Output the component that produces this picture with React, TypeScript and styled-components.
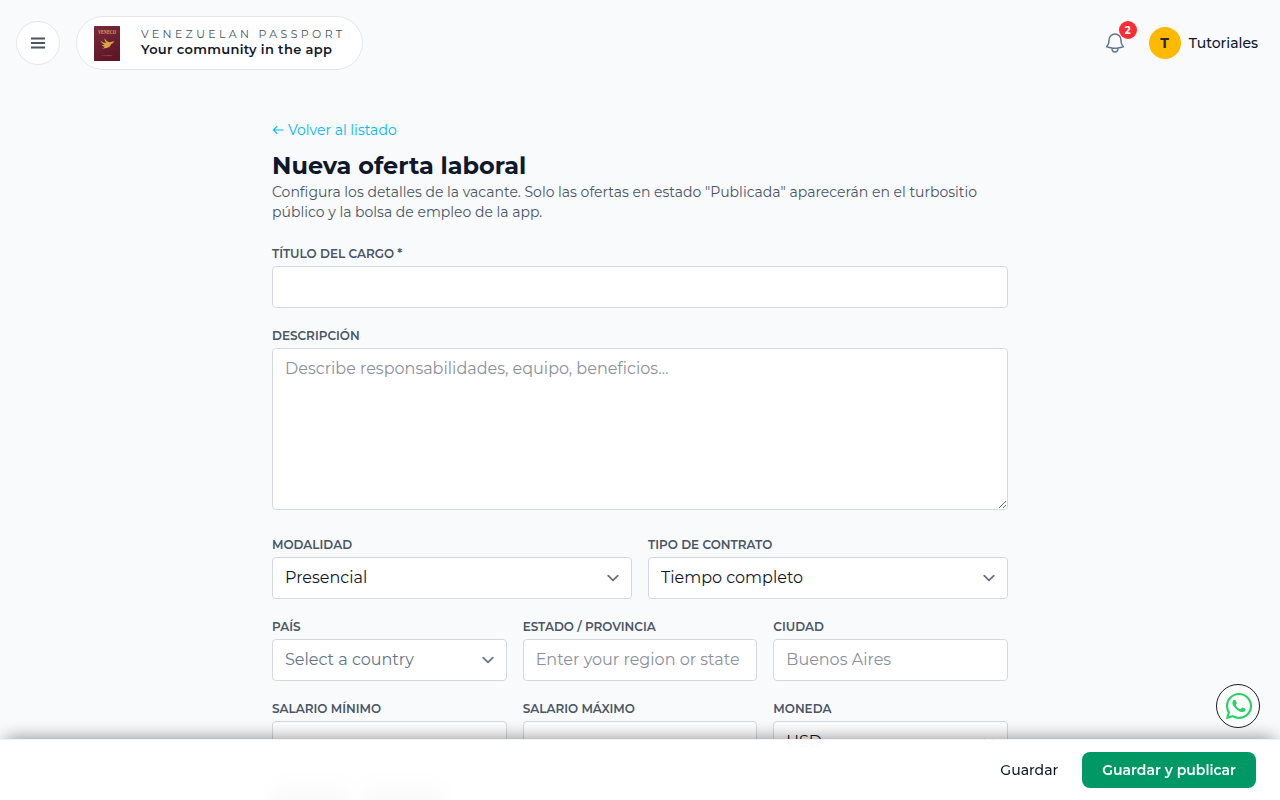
import React from "react";
import styled, { createGlobalStyle } from "styled-components";
import { FaWhatsapp } from "react-icons/fa";

const GlobalStyle = createGlobalStyle`
  *, *::before, *::after { box-sizing: border-box; }
  body {
    margin: 0;
    background: #f8fafc;
    color: #0f172a;
    font-family: Montserrat, Inter, sans-serif;
    font-size: 16px;
    line-height: 24px;
  }
  button, input, textarea, select { font: inherit; color: inherit; margin: 0; }
  h1, h2, p { margin: 0; }
`;

const Page = styled.div`
  height: 100vh;
  overflow: hidden;
`;

const Header = styled.header`
  display: flex;
  align-items: center;
  gap: 16px;
  padding: 16px 22px 16px 16px;
`;

const MenuButton = styled.button`
  display: grid;
  place-items: center;
  width: 44px;
  height: 44px;
  padding: 0;
  border: 1px solid #e5e7eb;
  border-radius: 50%;
  background: #fff;
`;

const BrandPill = styled.div`
  display: flex;
  align-items: center;
  gap: 21px;
  width: 287px;
  height: 54px;
  padding: 0 17px;
  border: 1px solid #e5e7eb;
  border-radius: 27px;
  background: #fff;
`;

const PassportArt = styled.svg`
  flex: none;
  width: 26px;
  height: 35px;
  margin-top: 1px;
`;

const BrandText = styled.div`
  display: flex;
  flex-direction: column;
  padding-bottom: 2px;
  white-space: nowrap;
`;

const Overline = styled.span`
  font-size: 11px;
  line-height: 15px;
  letter-spacing: 3.36px;
  color: #4a5565;
`;

const Tagline = styled.span`
  font-size: 13px;
  line-height: 15px;
  font-weight: 600;
  letter-spacing: 0.025em;
`;

const Account = styled.div`
  display: flex;
  align-items: center;
  margin-left: auto;
`;

const BellButton = styled.button`
  position: relative;
  display: grid;
  width: 24px;
  height: 24px;
  margin-right: 22px;
  padding: 0;
  border: 0;
  background: none;
  color: #64748b;
`;

const Badge = styled.span`
  position: absolute;
  top: -10px;
  right: -10px;
  width: 18px;
  height: 18px;
  border-radius: 50%;
  background: #fb2c36;
  color: #fff;
  font-size: 10px;
  line-height: 19px;
  font-weight: 700;
  text-align: center;
`;

const Avatar = styled.span`
  width: 32px;
  height: 32px;
  margin-right: 8px;
  border-radius: 50%;
  background: #ffb900;
  color: #1e2939;
  font-size: 14px;
  line-height: 32px;
  font-weight: 700;
  text-align: center;
`;

const UserName = styled.span`
  font-size: 14px;
  font-weight: 500;
`;

const Main = styled.main`
  width: 736px;
  margin: 34px auto 0;
`;

const BackLink = styled.a`
  display: flex;
  align-items: center;
  gap: 4px;
  height: 20px;
  color: #00b8f5;
  font-size: 14px;
  line-height: 20px;
`;

const Title = styled.h1`
  margin-top: 10px;
  font-size: 24px;
  line-height: 32px;
  font-weight: 700;
`;

const Lead = styled.p`
  font-size: 14px;
  line-height: 20px;
  color: #4a5565;
`;

const Form = styled.form`
  display: flex;
  flex-direction: column;
  gap: 20px;
  margin-top: 24px;
`;

const Row = styled.div<{ $columns: number }>`
  display: grid;
  grid-template-columns: repeat(${(p) => p.$columns}, minmax(0, 1fr));
  gap: 16px;
`;

const FieldBox = styled.label<{ $after?: number }>`
  display: flex;
  flex-direction: column;
  gap: 4px;
  padding-bottom: ${(p) => p.$after ?? 0}px;
`;

const FieldLabel = styled.span`
  font-size: 12px;
  line-height: 16px;
  font-weight: 600;
  text-transform: uppercase;
  white-space: nowrap;
  color: #4a5565;
`;

const Input = styled.input`
  width: 100%;
  height: 42px;
  padding: 0 12px 2px;
  border: 1px solid #d5d8de;
  border-radius: 4px;
  background: #fff;
  outline: none;
  &::placeholder { color: #8b919c; opacity: 1; }
`;

const TextArea = styled.textarea`
  display: block;
  width: 100%;
  height: 162px;
  padding: 8px 12px;
  border: 1px solid #d5d8de;
  border-radius: 4px;
  background: #fff;
  resize: vertical;
  outline: none;
  &::placeholder { color: #8b919c; opacity: 1; }
`;

const SelectBox = styled.span`
  position: relative;
  display: block;
`;

const SelectControl = styled.select<{ $muted?: boolean }>`
  display: block;
  width: 100%;
  height: 42px;
  padding: 0 40px 0 12px;
  appearance: none;
  border: 1px solid #d5d8de;
  border-radius: 4px;
  background: #fff;
  color: ${(p) => (p.$muted ? "#64748b" : "#0f172a")};
  outline: none;
`;

const Chevron = styled.svg`
  position: absolute;
  top: 9px;
  right: 7px;
  width: 24px;
  height: 24px;
  pointer-events: none;
`;

const BlurredHeading = styled.div`
  display: flex;
  gap: 16px;
  padding-top: 4px;
  filter: blur(5px);
`;

const BlurredWord = styled.span<{ $width: number }>`
  width: ${(p) => p.$width}px;
  height: 20px;
  border-radius: 4px;
  background: rgba(15, 23, 42, 0.5);
`;

const ActionBar = styled.footer`
  position: fixed;
  left: 0;
  right: 0;
  bottom: 0;
  display: flex;
  justify-content: flex-end;
  gap: 4px;
  padding: 12px 24px;
  border-top: 1px solid #f1f2f4;
  background: rgba(255, 255, 255, 0.95);
  backdrop-filter: blur(12px);
  box-shadow: 0 -6px 18px -6px rgba(0, 0, 0, 0.47);
`;

const ActionButton = styled.button<{ $primary?: boolean }>`
  height: 36px;
  padding: 0 20px;
  border: 0;
  border-radius: 8px;
  background: ${(p) => (p.$primary ? "#009966" : "transparent")};
  color: ${(p) => (p.$primary ? "#fff" : "#0f172a")};
  font-size: 14px;
  line-height: 20px;
  font-weight: ${(p) => (p.$primary ? 600 : 500)};
  white-space: nowrap;
`;

const ChatButton = styled.button`
  position: fixed;
  right: 20px;
  bottom: 72px;
  display: grid;
  place-items: center;
  width: 44px;
  height: 44px;
  padding: 0 0 1px 1px;
  border: 1px solid #1b1b1b;
  border-radius: 50%;
  background: #fff;
  color: #25d366;
`;

function MenuIcon() {
  return (
    <svg width="24" height="24" viewBox="0 0 24 24" stroke="#4a5565" strokeWidth="1.8">
      <path d="M5 7.5h14M5 12h14M5 16.5h14" />
    </svg>
  );
}

function Passport() {
  return (
    <PassportArt viewBox="0 0 26 35">
      <defs>
        <linearGradient id="cover" x1="0" y1="0" x2="0.4" y2="1">
          <stop offset="0" stopColor="#7a2a3c" />
          <stop offset="1" stopColor="#5e1727" />
        </linearGradient>
      </defs>
      <rect width="26" height="35" rx="0.6" fill="url(#cover)" />
      <text x="13" y="8.4" textAnchor="middle" fontFamily="Liberation Serif, serif" fontSize="5.2" fontWeight="700" fill="#dba766" textLength="18" lengthAdjust="spacingAndGlyphs">VENECO</text>
      <path d="M6.500 14.500c2 2.200 4 2.600 5.800 2.200-1.300-1.300-1.900-2.800-1.800-4.500 1.500 2.200 3 3.600 4.800 4 2-.3 3.500-.4 5-1.300-.8 1.800-1.800 2.700-3.200 3.200-.6 2.200-2.300 3.700-4.600 4-1.500.1-3 .8-4.300.3 1.200-.4 2-.9 2.600-1.700-1.500-.2-2.500-.8-3.200-1.900 1.300.3 2.200.2 3.100-.3-2-.6-3.600-2-4.200-4z" fill="#d9a441" />
      <text x="13" y="30" textAnchor="middle" fontFamily="Liberation Serif, serif" fontSize="2.6" fill="#c98d4d" textLength="11">PASAPORTE</text>
    </PassportArt>
  );
}

function BellIcon() {
  return (
    <svg width="24" height="24" viewBox="0 0 24 24" fill="none" stroke="currentColor" strokeWidth="1.5" strokeLinecap="round" strokeLinejoin="round">
      <path d="M14.857 17.082a23.848 23.848 0 0 0 5.454-1.310A8.967 8.967 0 0 1 18 9.750V9A6 6 0 0 0 6 9v.750a8.967 8.967 0 0 1-2.312 6.022c1.733.640 3.560 1.085 5.455 1.310m5.714 0a24.255 24.255 0 0 1-5.714 0m5.714 0a3 3 0 1 1-5.714 0" />
    </svg>
  );
}

function ArrowLeft() {
  return (
    <svg width="12" height="12" viewBox="0 0 12 12" fill="none" stroke="currentColor" strokeWidth="1.1">
      <path d="M11.500 6H1.800M5.200 2.200L1.500 6l3.700 3.800" />
    </svg>
  );
}

interface SelectProps {
  label: string;
  value: string;
  muted?: boolean;
}

function SelectField({ label, value, muted }: SelectProps) {
  return (
    <FieldBox>
      <FieldLabel>{label}</FieldLabel>
      <SelectBox>
        <SelectControl $muted={muted} defaultValue={value}>
          <option>{value}</option>
        </SelectControl>
        <Chevron viewBox="0 0 20 20" fill="none" stroke="#6b7280" strokeWidth="1.5" strokeLinecap="round" strokeLinejoin="round">
          <path d="M6 8l4 4 4-4" />
        </Chevron>
      </SelectBox>
    </FieldBox>
  );
}

interface InputProps {
  label: string;
  placeholder?: string;
}

function InputField({ label, placeholder }: InputProps) {
  return (
    <FieldBox>
      <FieldLabel>{label}</FieldLabel>
      <Input placeholder={placeholder} />
    </FieldBox>
  );
}

export default function App() {
  return (
    <Page>
      <GlobalStyle />
      <Header>
        <MenuButton type="button" aria-label="Menu"><MenuIcon /></MenuButton>
        <BrandPill>
          <Passport />
          <BrandText>
            <Overline>VENEZUELAN PASSPORT</Overline>
            <Tagline>Your community in the app</Tagline>
          </BrandText>
        </BrandPill>
        <Account>
          <BellButton type="button">
            <BellIcon />
            <Badge>2</Badge>
          </BellButton>
          <Avatar>T</Avatar>
          <UserName>Tutoriales</UserName>
        </Account>
      </Header>

      <Main>
        <BackLink><ArrowLeft />Volver al listado</BackLink>
        <Title>Nueva oferta laboral</Title>
        <Lead>
          Configura los detalles de la vacante. Solo las ofertas en estado "Publicada" aparecerán en el turbositio
          público y la bolsa de empleo de la app.
        </Lead>

        <Form>
          <InputField label="Título del cargo *" />
          <FieldBox $after={7}>
            <FieldLabel>Descripción</FieldLabel>
            <TextArea placeholder="Describe responsabilidades, equipo, beneficios…" />
          </FieldBox>
          <Row $columns={2}>
            <SelectField label="Modalidad" value="Presencial" />
            <SelectField label="Tipo de contrato" value="Tiempo completo" />
          </Row>
          <Row $columns={3}>
            <SelectField label="País" value="Select a country" muted />
            <InputField label="Estado / Provincia" placeholder="Enter your region or state" />
            <InputField label="Ciudad" placeholder="Buenos Aires" />
          </Row>
          <Row $columns={3}>
            <InputField label="Salario mínimo" />
            <InputField label="Salario máximo" />
            <SelectField label="Moneda" value="USD" />
          </Row>
          <BlurredHeading aria-hidden>
            <BlurredWord $width={76} />
            <BlurredWord $width={80} />
          </BlurredHeading>
        </Form>
      </Main>

      <ActionBar>
        <ActionButton type="button">Guardar</ActionButton>
        <ActionButton type="button" $primary>Guardar y publicar</ActionButton>
      </ActionBar>
      <ChatButton type="button" aria-label="WhatsApp"><FaWhatsapp size={30} /></ChatButton>
    </Page>
  );
}
